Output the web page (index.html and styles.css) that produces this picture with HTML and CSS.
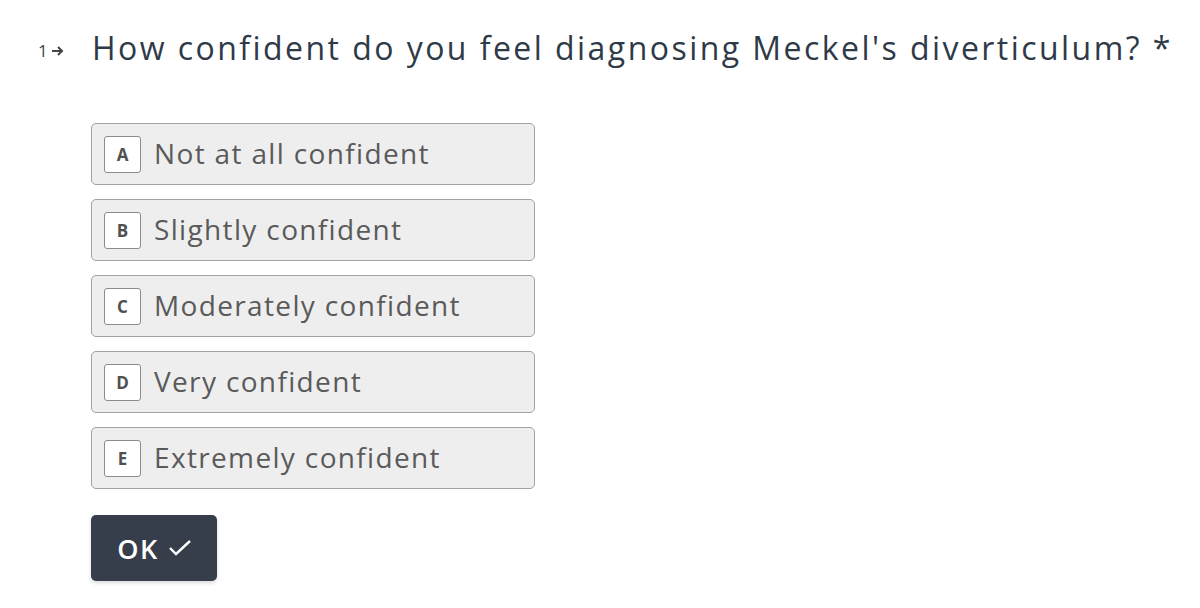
FILE: index.html
```html
<!DOCTYPE html>
<html>
<head>
<meta charset="utf-8">
<link rel="stylesheet" href="styles.css">
</head>
<body>
<div class="question">
  <div class="qhead">
    <span class="qnum">1<svg class="arrow" width="14" height="12" viewBox="0 0 14 12"><path d="M1 6h10M7 2l4 4-4 4" fill="none" stroke="#444" stroke-width="2"/></svg></span>
    <h1 class="qtext">How confident do you feel diagnosing Meckel's diverticulum? *</h1>
  </div>
  <div class="options">
    <div class="option"><span class="key">A</span><span class="label">Not at all confident</span></div>
    <div class="option"><span class="key">B</span><span class="label">Slightly confident</span></div>
    <div class="option"><span class="key">C</span><span class="label">Moderately confident</span></div>
    <div class="option"><span class="key">D</span><span class="label">Very confident</span></div>
    <div class="option"><span class="key">E</span><span class="label">Extremely confident</span></div>
  </div>
  <button class="ok">OK <svg width="26" height="20" viewBox="0 0 26 20"><path d="M3 10l6 6L23 3" fill="none" stroke="#fff" stroke-width="2.4"/></svg></button>
</div>
</body>
</html>
```
FILE: styles.css
```css
html, body { margin: 0; padding: 0; background: #fff; }
body { font-family: "Open Sans", sans-serif; width: 1200px; height: 608px; overflow: hidden; }
.question { padding: 26px 0 0 92px; }
.qhead { position: relative; }
.qnum { position: absolute; left: -54px; top: 13px; font-size: 17px; color: #444; display: flex; align-items: center; gap: 3px; }
.qtext { margin: 0; font-size: 32px; font-weight: 400; color: #2f3a48; line-height: 44px; white-space: nowrap; letter-spacing: 2.45px; }
.options { margin-top: 53px; display: flex; flex-direction: column; gap: 14px; }
.option { box-sizing: border-box; width: 444px; height: 62px; margin-left: -1px; background: #eeeeee; border: 1.5px solid #a3a3a3; border-radius: 5px; display: flex; align-items: center; padding-left: 12px; }
.key { box-sizing: border-box; width: 37px; height: 37px; background: #fff; border: 1.5px solid #8c8c8c; border-radius: 3px; display: flex; align-items: center; justify-content: center; font-size: 17px; font-weight: 700; color: #505050; }
.label { margin-left: 13px; margin-top: -3px; font-size: 28px; color: #5a5a5a; letter-spacing: 1.35px; }
.ok { margin-top: 26px; margin-left: -1px; width: 126px; height: 66px; background: #353e4a; border: none; border-radius: 5px; color: #fff; font-family: "Open Sans", sans-serif; font-size: 27px; font-weight: 600; letter-spacing: 1.5px; display: flex; align-items: center; justify-content: center; gap: 8px; padding: 0 0 0 2px; box-shadow: 0 2px 4px rgba(0,0,0,0.15); }
```
